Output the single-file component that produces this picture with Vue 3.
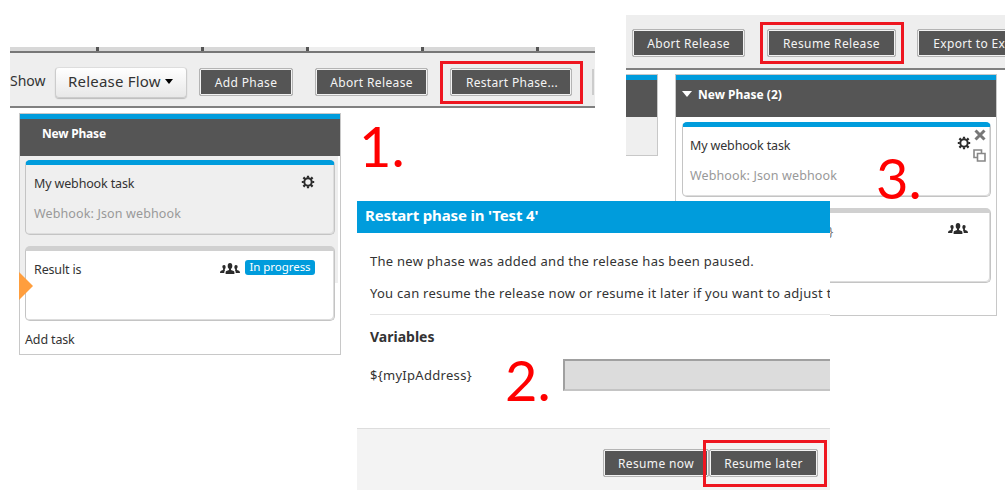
<script setup>
const tabs = [1, 2, 3, 4, 5, 6]
</script>

<template>
  <main class="board">
    <svg class="defs" width="0" height="0">
      <symbol id="gear" viewBox="0 0 14 14">
        <circle cx="7" cy="7" r="3.7" fill="none" stroke="#2b2b2b" stroke-width="2" />
        <path d="M7 .8v2M7 11.2v2M.8 7h2M11.2 7h2M2.4 2.4l1.700 1.700M9.900 9.900l1.700 1.700M2.400 11.600l1.700-1.700M9.900 4.100l1.700-1.700" stroke="#2b2b2b" stroke-width="2.200" />
      </symbol>
      <symbol id="team" viewBox="0 0 20 11">
        <ellipse cx="10" cy="3" rx="2.300" ry="3" fill="#2b2b2b" />
        <path d="M9 5h2v1.900l2.600 1c.6.300.8.700.8 1.300V11H5.600V9.200c0-.6.2-1 .8-1.300l2.600-1z" fill="#2b2b2b" />
        <path d="M4.300 2C2.900 1.900 2.200 2.700 2.400 4c.1.800.4 1.300.8 1.700 0 1-.5 1.500-1.600 1.800C.6 7.900.1 8.400 0 10h4.300c0-1.500.1-2.100.7-2.600-.4-.5-.4-1 0-1.500.5-.6.7-1 .6-2.100-.1-1.100-.6-1.700-1.300-1.800zM15.700 2c1.400-.1 2.100.7 1.900 2-.1.800-.4 1.300-.8 1.700 0 1 .5 1.500 1.600 1.800 1 .4 1.500.9 1.600 2.500h-4.300c0-1.500-.1-2.100-.7-2.600.4-.5.4-1 0-1.500-.5-.6-.7-1-.6-2.100.1-1.100.6-1.700 1.300-1.800z" fill="#2b2b2b" />
      </symbol>
    </svg>

    <section class="shot restart">
      <div class="tabs"><i v-for="t in tabs" :key="t" :class="['tab', 'tab' + t]"></i></div>
      <div class="toolbar bar1">
        <span class="show">Show</span>
        <button class="select">Release Flow<i class="caret"></i></button>
        <button class="btn add">Add Phase</button>
        <button class="btn abort">Abort Release</button>
        <button class="btn restart-btn">Restart Phase...</button>
        <i class="sliver"></i>
      </div>
      <div class="phase first">
        <header class="phase-head">New Phase</header>
        <div class="done-bg">
          <article class="card blue grey-card">
            <div class="row"><span class="name">My webhook task</span><svg class="gear"><use href="#gear" /></svg></div>
            <div class="kind">Webhook: Json webhook</div>
          </article>
        </div>
        <article class="card second">
          <div class="row"><span class="name">Result is</span><svg class="team"><use href="#team" /></svg><b class="badge">In progress</b></div>
        </article>
        <div class="add-task">Add task</div>
        <i class="pointer"></i>
      </div>
    </section>

    <section class="shot resume">
      <div class="toolbar bar3">
        <button class="btn abort">Abort Release</button>
        <button class="btn resume-btn">Resume Release</button>
        <button class="btn export">Export to Excel</button>
      </div>
      <div class="phases">
        <div class="phase stub"><header class="phase-head"></header></div>
        <div class="phase copy">
          <header class="phase-head"><i class="fold"></i>New Phase (2)</header>
          <article class="card blue">
            <div class="row"><span class="name">My webhook task</span><svg class="gear"><use href="#gear" /></svg></div>
            <div class="kind">Webhook: Json webhook</div>
            <div class="tools">
              <svg width="12" height="12" viewBox="0 0 12 12"><path d="M1.500 1.500l9 9M10.500 1.500l-9 9" stroke="#777" stroke-width="3" /></svg>
              <svg width="13" height="13" viewBox="0 0 13 13"><path d="M4 8.500H1v-7.500h7.500V4" fill="none" stroke="#888" stroke-width="1.600" /><path d="M4.500 4.500h7.500v7.500H4.500z" fill="#fff" stroke="#888" stroke-width="1.600" /></svg>
            </div>
          </article>
          <article class="card second">
            <div class="row"><span class="name var">Result is ${myIpAddress}</span><svg class="team"><use href="#team" /></svg></div>
          </article>
        </div>
      </div>
    </section>

    <section class="shot dialog">
      <header class="title">Restart phase in 'Test 4'</header>
      <div class="body">
        <p class="msg">The new phase was added and the release has been paused.</p>
        <p class="msg msg2">You can resume the release now or resume it later if you want to adjust the</p>
        <hr />
        <h2>Variables</h2>
        <div class="field"><label>${myIpAddress}</label><span class="input"></span></div>
      </div>
      <footer>
        <button class="btn now">Resume now</button>
        <button class="btn later">Resume later</button>
      </footer>
    </section>

    <i class="mark m1"></i><i class="mark m2"></i><i class="mark m3"></i>
    <b class="num n1">1.</b><b class="num n2">2.</b><b class="num n3">3.</b>
  </main>
</template>

<style>
body { background: #fff; }
</style>
<style scoped>
* { box-sizing: border-box; }
.board { position: relative; width: 1005px; height: 493px; overflow: hidden; font: 12.5px/18px "Noto Sans", "Open Sans", sans-serif; color: #333; }
.defs { position: absolute; }
.shot { position: absolute; overflow: hidden; }
i, b { font-style: normal; font-weight: 400; }
button { font: inherit; margin: 0; padding: 0; flex: none; }

.restart { left: 10px; top: 47px; width: 585px; height: 309px; }
.tabs { display: flex; height: 6px; border-bottom: 2px solid #777; background: #555; gap: 3px; }
.tab { background: #d8d8d8; }
.tab1 { width: 86px; }
.tab2 { width: 102px; }
.tab3 { width: 102px; }
.tab4 { width: 112px; background: #eee; }
.tab5 { width: 112px; }
.tab6 { flex: 1; }
.toolbar { display: flex; align-items: flex-start; background: #eee; border-bottom: 2px solid #808080; }
.bar1 { height: 55px; padding-top: 15px; }
.show { font-size: 14px; width: 45px; line-height: 25px; flex: none; }
.select { width: 132px; height: 31px; margin-top: -1px; border: 1px solid #ccc; border-top-color: #ddd; border-radius: 4px; background: linear-gradient(#fff, #e8e8e8); font-size: 15px; line-height: 27px; letter-spacing: .2px; color: #333; text-align: left; padding: 0 0 2px 12px; box-shadow: 0 1px 1px #bbb; }
.caret { display: inline-block; border: 4px solid transparent; border-top: 5px solid #000; border-bottom: 0; margin-left: 4px; vertical-align: 3px; }
.btn { height: 28px; background: #555; color: #f4f4f4; border: 1px solid #b4b4b4; border-radius: 2px; box-shadow: inset 0 0 0 1px #f2f2f2; font-size: 12px; letter-spacing: .36px; line-height: 25px; text-align: center; white-space: nowrap; }
.add { width: 94px; margin-left: 12px; }
.abort { width: 113px; }
.bar1 .abort { margin-left: 22px; }
.restart-btn { width: 122px; margin-left: 22px; padding-left: 2px; letter-spacing: .32px; }
.sliver { width: 2px; height: 26px; margin: 1px 0 0 20px; background: #ccc; }

.phase { position: relative; border: 1px solid #c8c8c8; background: #fff; }
.phase-head { height: 42px; border-top: 5px solid #009cdc; background: #555; color: #fff; font-weight: 700; font-size: 12px; line-height: 29px; letter-spacing: -.2px; }
.first { width: 322px; height: 242px; margin: 5px 0 0 9px; }
.first .phase-head { padding-left: 22px; }
.done-bg { width: 318px; height: 127px; background: #eee; padding: 4px 0 0 5px; }
.card { position: relative; width: 310px; height: 75px; border: 1px solid #c4c4c4; border-top: 5px solid #d0d0d0; border-radius: 5px; background: #fff; padding: 9px 8px 0; box-shadow: inset -1px -1px 0 #ddd; }
.card.blue { border-top-color: #009cdc; }
.grey-card { background: #efefef; }
.second { margin: 11px 0 0 5px; }
.first .second { margin-top: -37px; }
.row { display: flex; align-items: center; height: 20px; }
.name { flex: 1; letter-spacing: -.15px; }
.kind { margin-top: 11px; color: #999; letter-spacing: .13px; }
.gear { width: 14px; height: 14px; margin: -4px 11px 0 0; }
.team { width: 20px; height: 11px; margin-top: -5px; }
.badge { margin: -6px 11px 0 5px; width: 70px; height: 15px; border-radius: 3px; background: #009cdc; color: #fff; font-size: 11.5px; letter-spacing: -.05px; line-height: 14px; text-align: center; }
.first .team { margin-top: -4px; }
.add-task { margin: 10px 0 0 5px; letter-spacing: -.15px; }
.pointer { position: absolute; left: -1px; top: 158px; border: 14px solid transparent; border-left-color: #ff9e3d; border-right: 0; }

.resume { left: 626px; top: 15px; width: 379px; height: 302px; }
.bar3 { height: 55px; padding: 14px 0 0 6px; }
.resume-btn { width: 129px; margin-left: 22px; }
.export { width: 121px; margin-left: 21px; }
.phases { display: flex; gap: 17px; align-items: flex-start; padding-top: 4px; }
.stub { width: 32px; height: 82px; border-left: 0; background: #efefef; }
.copy { width: 322px; height: 242px; }
.copy .phase-head { padding-left: 6px; letter-spacing: 0; }
.fold { display: inline-block; border: 5px solid transparent; border-top: 6px solid #fff; border-bottom: 0; margin-right: 6px; vertical-align: 2px; }
.copy .card.blue { margin: 5px 0 0 6px; }
.copy .second { margin-left: 6px; }
.copy .card { width: 309px; padding-left: 7px; }
.copy .team { margin: -7px 14px 0 0; }
.copy .gear { margin: -6px 11px 0 0; }
.tools { position: absolute; right: 4px; top: 2px; display: flex; flex-direction: column; align-items: center; gap: 8px; }
.var { letter-spacing: -.12px; color: #777; }

.dialog { left: 357px; top: 201px; width: 473px; height: 289px; background: #fff; display: flex; flex-direction: column; }
.title { height: 32px; background: #009cdc; color: #fff; font-size: 15px; font-weight: 700; letter-spacing: -.15px; line-height: 29px; padding-left: 8px; flex: none; }
.body { flex: 1; padding: 19px 0 0 13px; font-size: 13px; }
.msg { margin: 0 0 14px; letter-spacing: .27px; white-space: nowrap; line-height: 18px; }
.msg2 { margin-bottom: 12px; }
hr { margin: 0; border: 0; border-top: 1px solid #e4e4e4; }
h2 { margin: 13px 0 13px; font-size: 14px; line-height: 18px; }
.field { display: flex; align-items: center; letter-spacing: .3px; }
label { width: 193px; flex: none; }
.input { flex: 1; height: 32px; border: 2px solid #a0a0a0; border-bottom-color: #c4c4c4; border-right: 0; background: #dcdcdc; }
footer { height: 62px; background: #f3f3f3; border-top: 1px solid #ddd; display: flex; padding: 20px 0 0 246px; flex: none; }
.now { width: 106px; }
.later { width: 109px; }

.mark { position: absolute; border: 3px solid #ee1620; }
.m1 { left: 440px; top: 61px; width: 143px; height: 43px; }
.m2 { left: 703px; top: 440px; width: 124px; height: 47px; }
.m3 { left: 760px; top: 22px; width: 144px; height: 42px; }
.num { position: absolute; font: 400 56px/56px Lato, sans-serif; color: #f00; }
.n1 { left: 359px; top: 118px; }
.n2 { left: 505px; top: 352px; }
.n3 { left: 876px; top: 150px; }
</style>
